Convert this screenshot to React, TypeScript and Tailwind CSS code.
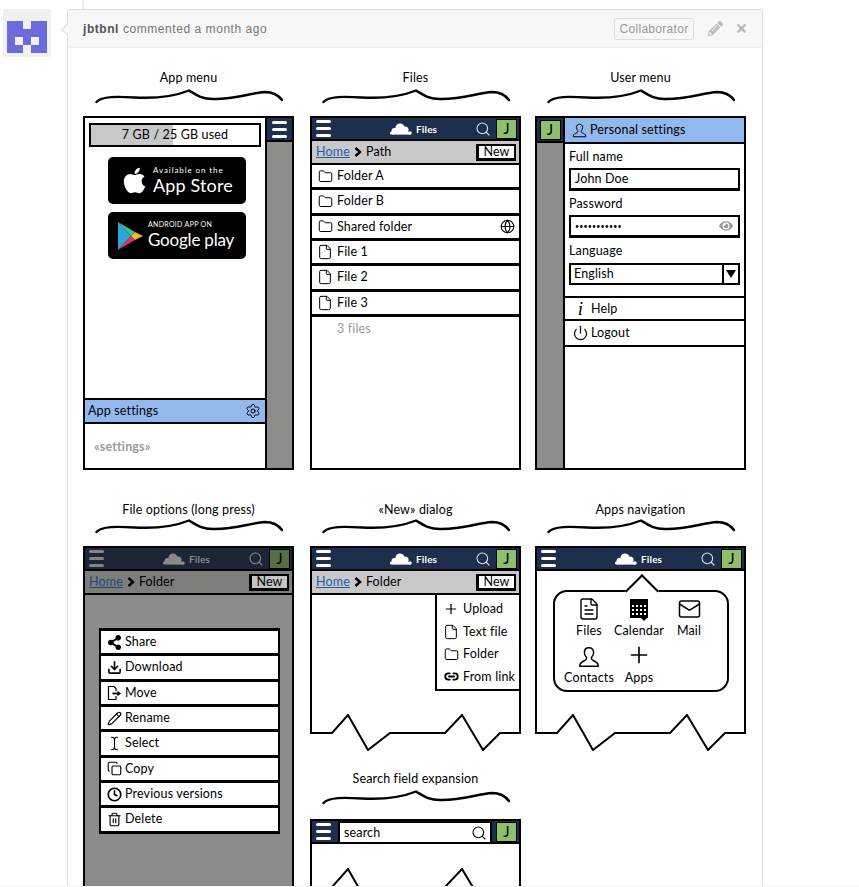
import type { ReactNode } from "react";
import { Copy, Download, File, FileText, Folder, Globe, Link2, Mail, Pencil, Plus, Power, Search, Settings, TextCursor, Trash2, Clock } from "lucide-react";
import { FaApple, FaEye, FaPencilAlt, FaShareAlt, FaTimes } from "react-icons/fa";

function Brace({ top }: { top: string }) {
  return (
    <div className={top}>
      <svg viewBox="0 0 188 16" className="mx-auto block h-[16px] w-[188px]" fill="none" stroke="#000">
        <path
          d="M1.5 14 C 7 8, 22 8.5, 40 9.5 C 60 10.5, 78 9, 94 2.5 C 100 6, 106 11, 118 11 C 140 11.5, 155 5, 170 4 C 178 4, 184 8, 187 12"
          strokeWidth="2.4"
          strokeLinecap="round"
        />
      </svg>
    </div>
  );
}

function Section({ title, top = "mt-[2px]", gap, children }: { title: string; top?: string; gap: string; children: ReactNode }) {
  return (
    <div className="w-[211px]">
      <div className="h-[16px] whitespace-nowrap text-center text-[12.5px] leading-[16px] text-black">{title}</div>
      <Brace top={top} />
      <div className={gap}>{children}</div>
    </div>
  );
}

function Hamburger({ dim }: { dim?: boolean }) {
  const bar = dim ? "h-[3px] w-[15px] rounded-full bg-[#858583]" : "h-[3px] w-[15px] rounded-full bg-white";
  return (
    <div className="flex flex-col gap-[4px]">
      <div className={bar} />
      <div className={bar} />
      <div className={bar} />
    </div>
  );
}

function Cloud({ color }: { color: string }) {
  return (
    <svg viewBox="0 0 24 12" className="h-[12px] w-[24px]" fill={color}>
      <circle cx="11" cy="5" r="4.6" />
      <circle cx="5.5" cy="8" r="3" />
      <circle cx="16" cy="7" r="3.6" />
      <circle cx="2.5" cy="10" r="1.6" />
      <circle cx="21" cy="10" r="1.8" />
      <rect x="3" y="9" width="18" height="2.6" />
    </svg>
  );
}

function UserBadge({ dim }: { dim?: boolean }) {
  return (
    <div
      className={
        dim
          ? "flex h-[20px] w-[21px] items-center justify-center border border-black bg-[#566f47] text-[15px] leading-none text-black"
          : "flex h-[20px] w-[21px] items-center justify-center border border-black bg-[#8dbf6c] text-[15px] leading-none text-black"
      }
    >
      J
    </div>
  );
}

function TopBar({ dim }: { dim?: boolean }) {
  return (
    <div
      className={
        dim
          ? "flex h-[23px] items-center border-b-2 border-black bg-[#1c2536] pl-[4px] pr-[2px]"
          : "flex h-[23px] items-center border-b-2 border-black bg-[#1c2f4d] pl-[4px] pr-[2px]"
      }
    >
      <Hamburger dim={dim} />
      <div className="ml-[58px] flex items-center gap-[3px]">
        <Cloud color={dim ? "#8a8a88" : "#ffffff"} />
        <span className={dim ? "text-[10px] font-bold text-[#8a8a88]" : "text-[10px] font-bold text-white"}>Files</span>
      </div>
      <Search className={dim ? "ml-auto h-[16px] w-[16px] text-[#8a8a88]" : "ml-auto h-[16px] w-[16px] text-[#e5e5e5]"} strokeWidth={1.6} />
      <div className="ml-[5px]">
        <UserBadge dim={dim} />
      </div>
    </div>
  );
}

function Chevron() {
  return (
    <svg viewBox="0 0 8 10" className="mx-[4px] h-[10px] w-[8px]" fill="none" stroke="#000" strokeWidth="2.4">
      <path d="M1.5 1 L6 5 L1.5 9" />
    </svg>
  );
}

function Crumbs({ leaf, dim }: { leaf: string; dim?: boolean }) {
  return (
    <div
      className={
        dim
          ? "flex h-[24px] items-center border-b-2 border-black bg-[#7d7d7b] pl-[4px] pr-[3px]"
          : "flex h-[24px] items-center border-b-2 border-black bg-[#c8c8c8] pl-[4px] pr-[3px]"
      }
    >
      <span className={dim ? "text-[#244a7c] underline" : "text-[#1f5fa8] underline"}>Home</span>
      <Chevron />
      <span>{leaf}</span>
      <div
        className={
          dim
            ? "ml-auto flex h-[17px] w-[40px] items-center justify-center border-2 border-b-[3px] border-l-[3px] border-black bg-[#c4c4c2] pt-[1px] leading-none"
            : "ml-auto flex h-[17px] w-[40px] items-center justify-center border-2 border-b-[3px] border-l-[3px] border-black bg-white pt-[1px] leading-none"
        }
      >
        New
      </div>
    </div>
  );
}

function ListRow({ icon, label, trailing }: { icon: ReactNode; label: string; trailing?: ReactNode }) {
  return (
    <div className="flex h-[25.33px] items-center border-b-[3px] border-black bg-white pl-[5px] pr-[4px]">
      <span className="flex w-[16px] justify-center">{icon}</span>
      <span className="ml-[4px]">{label}</span>
      {trailing ? <span className="ml-auto">{trailing}</span> : null}
    </div>
  );
}

function Jag() {
  return (
    <svg viewBox="0 0 211 37" className="block h-[37px] w-[211px]" fill="none" stroke="#000" strokeWidth="2">
      <path d="M1 0 V19 H22 L38 1 L58 36 L80 19 H135 L152 1 L173 36 L190 19 H210 V0" />
    </svg>
  );
}

function PlayLogo() {
  return (
    <svg viewBox="0 0 26 30" className="h-[30px] w-[26px]">
      <polygon points="1,1 14,15 1,29" fill="#2fa4d8" />
      <polygon points="1,1 18,11 14,15" fill="#3fbf8f" />
      <polygon points="1,29 18,19 14,15" fill="#d8336a" />
      <polygon points="18,11 26,15 18,19 14,15" fill="#f2b632" />
    </svg>
  );
}

function AppMenu() {
  return (
    <div className="flex h-[354px] border-2 border-black bg-[#8c8c8a]">
      <div className="flex w-[182px] flex-col border-r-2 border-black bg-white">
        <div className="mx-[4px] mt-[5px] flex h-[24px] items-center justify-center border-2 border-black bg-[linear-gradient(to_right,#c8c8c8_49%,#fff_49%)]">
          7 GB / 25 GB used
        </div>
        <div className="ml-[23px] mt-[10px] flex h-[47px] w-[138px] items-center rounded-[5px] bg-black pl-[14px] text-white">
          <FaApple className="h-[29px] w-[25px]" />
          <div className="ml-[6px] flex flex-col whitespace-nowrap">
            <span className="text-[8px] leading-[10px] tracking-[0.9px]">Available on the</span>
            <span className="text-[18px] leading-[21px]">App Store</span>
          </div>
        </div>
        <div className="ml-[23px] mt-[8px] flex h-[47px] w-[138px] items-center rounded-[5px] bg-black pl-[9px] text-white">
          <PlayLogo />
          <div className="ml-[5px] flex flex-col whitespace-nowrap">
            <span className="text-[7px] leading-[9px] tracking-[0.3px]">ANDROID APP ON</span>
            <span className="text-[17px] leading-[22px] tracking-[-0.2px]">Google play</span>
          </div>
        </div>
        <div className="mt-auto flex h-[26px] items-center border-y-2 border-black bg-[#92b9ee] pl-[3px] pr-[4px]">
          App settings
          <Settings className="ml-auto h-[16px] w-[16px]" strokeWidth={1.5} />
        </div>
        <div className="h-[44px] pl-[9px] pt-[15px] font-bold text-[#9a9a9a]">«settings»</div>
      </div>
      <div className="flex-1">
        <div className="flex h-[24px] items-center justify-center border-b-2 border-black bg-[#1c2f4d]">
          <Hamburger />
        </div>
      </div>
    </div>
  );
}

function FilesPhone() {
  const folder = <Folder className="h-[15px] w-[15px]" strokeWidth={1.6} />;
  const file = <File className="h-[16px] w-[16px]" strokeWidth={1.5} />;
  return (
    <div className="h-[354px] border-2 border-black bg-white">
      <TopBar />
      <Crumbs leaf="Path" />
      <ListRow icon={folder} label="Folder A" />
      <ListRow icon={folder} label="Folder B" />
      <ListRow icon={folder} label="Shared folder" trailing={<Globe className="h-[15px] w-[15px]" strokeWidth={1.8} />} />
      <ListRow icon={file} label="File 1" />
      <ListRow icon={file} label="File 2" />
      <ListRow icon={file} label="File 3" />
      <div className="pl-[25px] pt-[4px] text-[#9a9a9a]">3 files</div>
    </div>
  );
}

function Field({ children }: { children: ReactNode }) {
  return <div className="mt-[3px] flex h-[23px] items-center border-2 border-b-[3px] border-black pl-[4px] pr-[5px]">{children}</div>;
}

function UserMenu() {
  return (
    <div className="flex h-[354px] border-2 border-black bg-[#8c8c8a]">
      <div className="w-[26px]">
        <div className="flex h-[25px] items-center justify-center border-b-2 border-black bg-[#1c2f4d]">
          <UserBadge />
        </div>
      </div>
      <div className="flex flex-1 flex-col border-l-2 border-black bg-white">
        <div className="flex h-[26px] items-center border-b-2 border-black bg-[#92b9ee] pl-[7px]">
          <ContactIcon className="h-[15px] w-[15px]" />
          <span className="ml-[3px]">Personal settings</span>
        </div>
        <div className="px-[4px]">
          <div className="mt-[5px]">Full name</div>
          <Field>John Doe</Field>
          <div className="mt-[5px]">Password</div>
          <Field>
            <span className="text-[7px] tracking-[0.2px]">•••••••••••</span>
            <FaEye className="ml-auto h-[14px] w-[14px] text-[#999]" />
          </Field>
          <div className="mt-[5px]">Language</div>
          <div className="mt-[4px] flex h-[22px] items-center border-2 border-black pl-[3px]">
            English
            <div className="ml-auto flex h-full w-[16px] items-center justify-center border-l-2 border-black">
              <svg viewBox="0 0 10 8" className="h-[8px] w-[10px]">
                <polygon points="0,0 10,0 5,8" fill="#000" />
              </svg>
            </div>
          </div>
        </div>
        <div className="mt-[11px] flex h-[25px] items-center border-y-2 border-black pl-[6px]">
          <span className="w-[19px] text-center font-['Liberation_Serif',serif] text-[19px] italic leading-none">i</span>
          <span className="ml-[1px]">Help</span>
        </div>
        <div className="flex h-[26px] items-center border-b-2 border-black pl-[6px]">
          <Power className="h-[16px] w-[19px]" strokeWidth={1.8} />
          <span className="ml-[1px]">Logout</span>
        </div>
      </div>
    </div>
  );
}

function ContactIcon({ className }: { className: string }) {
  return (
    <svg viewBox="0 0 24 24" className={className} fill="none" stroke="#000" strokeWidth="1.6">
      <path d="M12 2c-3 0-5 2-5 5 0 2 1 4 2 5 1 1 0 3-1 3.5C5 17 2 18 2 21v1h20v-1c0-3-3-4-6-5.5-1-.5-2-2.5-1-3.5 1-1 2-3 2-5 0-3-2-5-5-5z" />
    </svg>
  );
}

function MoveIcon() {
  return (
    <svg viewBox="0 0 16 16" className="h-[16px] w-[16px]" fill="none" stroke="#000" strokeWidth="1.2">
      <path d="M10 6 V3.5 L8 1.5 H2.5 V14.5 H10 V11" />
      <path d="M6.5 8.5 H12" strokeWidth="1.8" />
      <polygon points="11.5,5.8 15,8.5 11.5,11.2" fill="#000" stroke="none" />
    </svg>
  );
}

function OptionRow({ icon, label }: { icon: ReactNode; label: string }) {
  return (
    <div className="flex h-[25.33px] items-center border-b-[3px] border-black bg-white pl-[4px]">
      <span className="flex w-[18px] justify-center">{icon}</span>
      <span className="ml-[2px]">{label}</span>
    </div>
  );
}

function FileOptions() {
  const size = "h-[15px] w-[15px]";
  return (
    <div className="h-[354px] border-2 border-black bg-[#8b8b89]">
      <TopBar dim />
      <Crumbs leaf="Folder" dim />
      <div className="ml-[14px] mt-[33px] w-[181px] border-x-2 border-t-[3px] border-black">
        <OptionRow icon={<FaShareAlt className={size} />} label="Share" />
        <OptionRow icon={<Download className={size} strokeWidth={2.6} />} label="Download" />
        <OptionRow icon={<MoveIcon />} label="Move" />
        <OptionRow icon={<Pencil className={size} strokeWidth={1.8} />} label="Rename" />
        <OptionRow icon={<TextCursor className={size} strokeWidth={1.8} />} label="Select" />
        <OptionRow icon={<Copy className={size} strokeWidth={1.8} />} label="Copy" />
        <OptionRow icon={<Clock className={size} strokeWidth={2.6} />} label="Previous versions" />
        <OptionRow icon={<Trash2 className={size} strokeWidth={1.8} />} label="Delete" />
      </div>
    </div>
  );
}

function NewDialog() {
  const items = [
    { label: "Upload", icon: <Plus className="h-[18px] w-[18px]" strokeWidth={1.8} /> },
    { label: "Text file", icon: <File className="h-[16px] w-[16px]" strokeWidth={1.5} /> },
    { label: "Folder", icon: <Folder className="h-[15px] w-[15px]" strokeWidth={1.6} /> },
    { label: "From link", icon: <Link2 className="h-[15px] w-[15px]" strokeWidth={3} /> },
  ];
  return (
    <div className="bg-white">
      <div className="border-x-2 border-t-2 border-black">
        <TopBar />
        <Crumbs leaf="Folder" />
        <div className="relative h-[119px]">
          <div className="absolute right-0 top-0 flex h-[96px] w-[84px] flex-col border-b-2 border-l-2 border-black pt-[3px]">
            {items.map((item) => (
              <div key={item.label} className="flex h-[22.5px] items-center whitespace-nowrap pl-[6px]">
                <span className="flex w-[16px] justify-center">{item.icon}</span>
                <span className="ml-[4px]">{item.label}</span>
              </div>
            ))}
          </div>
        </div>
      </div>
      <Jag />
    </div>
  );
}

function CalendarIcon() {
  return (
    <svg viewBox="0 0 20 22" className="h-[22px] w-[20px]">
      <rect x="1" y="0" width="18" height="19" fill="#000" />
      <g fill="#fff">
        {[6, 10, 14].map((y) =>
          [3, 7, 11, 15].map((x) => <rect key={`${x}-${y}`} x={x} y={y} width="2" height="2" />)
        )}
      </g>
      <polygon points="12,19 18,19 15,22" fill="#000" />
    </svg>
  );
}

function AppTile({ icon, label }: { icon: ReactNode; label: string }) {
  return (
    <div className="flex flex-col items-center whitespace-nowrap">
      <div className="flex h-[26px] items-end">{icon}</div>
      <span className="mt-[2px] h-[17px]">{label}</span>
    </div>
  );
}

function AppsNavigation() {
  return (
    <div className="bg-white">
      <div className="border-x-2 border-t-2 border-black">
        <TopBar />
        <div className="relative h-[143px] pl-[16px] pt-[19px]">
          <div className="relative h-[102px] w-[176px] rounded-[14px] border-2 border-black bg-white">
            <div className="absolute -top-[13px] left-[75px] h-[24px] w-[24px] rotate-45 border-l-2 border-t-2 border-black bg-white" />
            <div className="relative grid grid-cols-[50px_50px_50px] pl-[9px] pt-[3px]">
              <AppTile icon={<FileText className="h-[24px] w-[24px]" strokeWidth={1.4} />} label="Files" />
              <AppTile icon={<CalendarIcon />} label="Calendar" />
              <AppTile icon={<Mail className="h-[24px] w-[25px]" strokeWidth={1.5} />} label="Mail" />
            </div>
            <div className="relative mt-[2px] grid grid-cols-[50px_50px] pl-[9px]">
              <AppTile icon={<ContactIcon className="h-[22px] w-[24px]" />} label="Contacts" />
              <AppTile icon={<Plus className="h-[26px] w-[26px]" strokeWidth={1.5} />} label="Apps" />
            </div>
          </div>
        </div>
      </div>
      <Jag />
    </div>
  );
}

function SearchExpansion() {
  return (
    <div className="bg-white">
      <div className="border-x-2 border-t-2 border-black">
        <div className="flex h-[23px] items-center border-b-2 border-black bg-[#1c2f4d] pl-[4px] pr-[2px]">
          <Hamburger />
          <div className="ml-[7px] flex h-full w-[154px] items-center border-2 border-b-0 border-black bg-white pl-[4px] pr-[3px]">
            search
            <Search className="ml-auto h-[16px] w-[16px]" strokeWidth={1.6} />
          </div>
          <div className="ml-auto">
            <UserBadge />
          </div>
        </div>
        <div className="h-[24px]" />
      </div>
      <Jag />
    </div>
  );
}

export default function App() {
  return (
    <div className="h-[887px] w-[859px] overflow-hidden bg-white">
      <div className="flex h-[886px] items-start overflow-hidden pl-[3px] pt-[9px]">
        <div className="h-[48px] w-[48px] shrink-0 rounded-[3px] bg-[#f0f0f0] pl-[4px] pt-[12px]">
          <svg viewBox="0 0 40 32" className="h-[32px] w-[40px]" fill="#6b6bdb">
            <path d="M0 0 H16 V8 H24 V0 H40 V32 H24 V24 H16 V32 H0 Z M8 16 V24 H16 V16 Z M24 16 V24 H32 V16 Z" fillRule="evenodd" />
          </svg>
        </div>
        <div className="relative ml-[16px] h-[900px] w-[696px] shrink-0 rounded-t-[3px] border border-[#ddd]">
          <div className="absolute -left-[5px] top-[15px] h-[9px] w-[9px] rotate-45 border-b border-l border-[#ddd] bg-[#f7f7f7]" />
          <div className="absolute -top-[10px] left-[14px] h-[9px] w-[2px] bg-[#eee]" />
          <div className="flex h-[38px] items-center rounded-t-[3px] border-b border-[#eee] bg-[#f7f7f7] pl-[15px] pr-[14px] font-['Liberation_Sans',sans-serif] text-[12px] tracking-[0.55px] text-[#767676]">
            <span className="font-bold text-[#555]">jbtbnl</span>
            <span className="ml-[4px]">commented a month ago</span>
            <span className="ml-auto flex h-[22px] w-[80px] items-center justify-center rounded-[3px] border border-[#ddd] tracking-[0.3px] text-[#999]">Collaborator</span>
            <FaPencilAlt className="ml-[14px] h-[15px] w-[15px] text-[#bbb]" />
            <FaTimes className="ml-[12px] h-[13px] w-[13px] text-[#bbb]" />
          </div>
          <div className="pl-[15px] pt-[22px] font-['Lato',sans-serif] text-[12.5px] leading-[16px] tracking-[0.15px] text-black">
            <div className="grid grid-cols-[227px_225px_211px]">
              <Section title="App menu" gap="mt-[12px]">
                <AppMenu />
              </Section>
              <Section title="Files" gap="mt-[12px]">
                <FilesPhone />
              </Section>
              <Section title="User menu" gap="mt-[12px]">
                <UserMenu />
              </Section>
            </div>
            <div className="mt-[32px] grid grid-cols-[227px_225px_211px]">
              <Section title="File options (long press)" top="mt-0" gap="mt-[12px]">
                <FileOptions />
              </Section>
              <div>
                <Section title="«New» dialog" top="mt-0" gap="mt-[12px]">
                  <NewDialog />
                </Section>
                <div className="mt-[20px]">
                  <Section title="Search field expansion" gap="mt-[14px]">
                    <SearchExpansion />
                  </Section>
                </div>
              </div>
              <Section title="Apps navigation" top="mt-0" gap="mt-[12px]">
                <AppsNavigation />
              </Section>
            </div>
          </div>
        </div>
      </div>
      <div className="h-[1px] bg-[#f4f4f4]" />
    </div>
  );
}
